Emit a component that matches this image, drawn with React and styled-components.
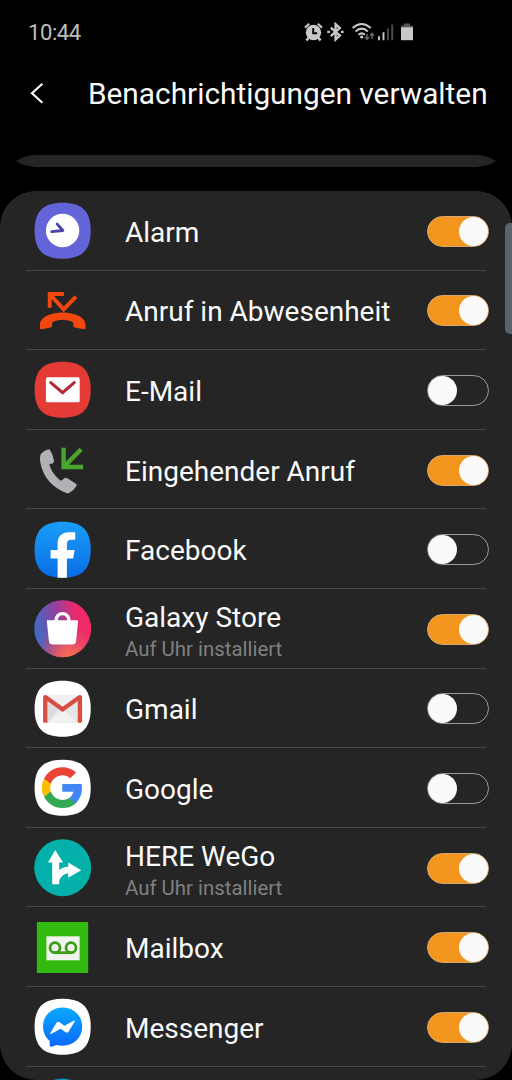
import { useState } from 'react';
import styled, { createGlobalStyle } from 'styled-components';

const GlobalStyle = createGlobalStyle`
  * {
    box-sizing: border-box;
  }

  body {
    margin: 0;
    background-color: #000;
    font-family: Roboto, 'Liberation Sans', sans-serif;
  }
`;

const Screen = styled.div`
  position: relative;
  display: flex;
  flex-direction: column;
  width: 512px;
  height: 1080px;
  background-color: #000;
  overflow: hidden;
`;

const StatusBar = styled.div`
  display: flex;
  align-items: center;
  justify-content: space-between;
  height: 64px;
  padding: 0 99px 0 28px;
`;

const Clock = styled.span`
  font-size: 22px;
  letter-spacing: -0.4px;
  color: #bdbdbd;
`;

const StatusIcons = styled.div`
  display: flex;
  align-items: center;

  svg {
    display: block;
  }
`;

const StatusIcon = styled.svg`
  width: ${({ $width }) => $width}px;
  height: 20px;
  margin-left: ${({ $gap }) => $gap || 0}px;
`;

const Header = styled.header`
  display: flex;
  align-items: center;
  height: 60px;
  padding-left: 28px;
`;

const BackButton = styled.button`
  display: flex;
  width: 60px;
  padding: 0;
  border: none;
  background: none;
`;

const Title = styled.h1`
  margin: 0;
  font-size: 29.8px;
  font-weight: 400;
  line-height: 36px;
  white-space: nowrap;
  color: #fafafa;
`;

const ScrollArea = styled.main`
  flex: 1;
  min-height: 0;
  margin-top: 31px;
  border-radius: 36px;
  overflow: hidden;
`;

const Card = styled.section`
  background-color: #252525;
  border-radius: 36px;
`;

// Scrolled almost out of view, only its lower edge is left
const PreviousCard = styled(Card)`
  height: 80px;
  margin-top: -68px;
  margin-bottom: 24px;
`;

const Row = styled.div`
  display: flex;
  align-items: center;
  position: relative;
  height: 79.6px;
  padding: 0 23px 0 34px;

  & + &::before {
    content: '';
    position: absolute;
    top: -1px;
    left: 26px;
    right: 26px;
    height: 1px;
    background-color: #484848;
  }
`;

const AppIcon = styled.svg`
  flex: none;
  width: 57px;
  height: 57px;
  overflow: visible;
`;

const Labels = styled.div`
  flex: 1;
  padding-left: 34px;
  padding-top: 4px;
`;

const Name = styled.div`
  font-size: 28px;
  line-height: 34px;
  white-space: nowrap;
  color: #fafafa;
`;

const Detail = styled.div`
  font-size: 20.4px;
  line-height: 24px;
  margin-top: 2px;
  color: #7f8082;
`;

const Track = styled.button`
  display: flex;
  justify-content: ${({ $on }) => ($on ? 'flex-end' : 'flex-start')};
  align-items: center;
  width: 62px;
  height: 31px;
  margin-top: 1px;
  padding: 0;
  border: 1px solid ${({ $on }) => ($on ? '#d3a872' : '#9b9b9b')};
  border-radius: 16px;
  background-color: ${({ $on }) => ($on ? '#f3961e' : 'transparent')};
`;

const Knob = styled.span`
  width: 29px;
  height: 29px;
  border-radius: 50%;
  background-color: #fafafa;
`;

const ScrollThumb = styled.div`
  position: absolute;
  top: 223px;
  right: 0;
  width: 7px;
  height: 111px;
  border-radius: 5px 0 0 5px;
  background-color: #59656c;
`;

const Squircle = ({ fill }) => (
  <path d="M28.2 0C47.7 0 56.3 8.600 56.3 28S47.7 56 28.2 56 .2 47.4 .2 28 8.7 0 28.2 0z" fill={fill} />
);

const icons = {
  alarm: (
    <>
      <Squircle fill="#6264d8" />
      <circle cx="28.2" cy="27.8" r="16.7" fill="#fff" />
      <path d="M22.8 21.4l5.7 6.4-11.2 1.1" fill="none" stroke="#4d43ae" strokeWidth="2.8" strokeLinecap="round" strokeLinejoin="round" />
    </>
  ),
  missed: (
    <g transform="translate(0 .4)">
      <path d="M29.5 10.9H15.3v13.8M15.5 11.1l13.7 15.2L41.6 13.6" fill="none" stroke="#f4460f" strokeWidth="3.9" />
      <path d="M5.5 42C5.5 33 18 29.3 28.2 29.3S51.2 33 51.2 42v2.8q0 1.7-1.8 1.4l-9-1.7q-1.4-.3-1.6-1.6l.2-2.3q.1-1.4-1.6-2.2-9-3.3-18.2 0-1.7.8-1.6 2.2l.2 2.3q-.2 1.3-1.6 1.6l-9 1.7q-1.700.3-1.700-1.400z" fill="#f4460f" />
    </g>
  ),
  email: (
    <>
      <Squircle fill="#e53b36" />
      <rect x="11.5" y="15.6" width="33.8" height="25" rx="1.6" fill="#fff" />
      <path d="M16.4 20.9l11.8 10 11.6-10" fill="none" stroke="#b12a38" strokeWidth="3.2" strokeLinecap="round" />
    </>
  ),
  incoming: (
    <>
      <path d="M29.2 6v19.3h19.6M46.8 7.6L30.3 24.2" fill="none" stroke="#49a52d" strokeWidth="4.4" />
      <path d="M6.4 12.3Q9.6 8.5 14 7.6q1.2-.1 1.9 1.2 2.8 4.5 3.7 10 .2 2.2-1.2 2.9l-3.5.7q1.8 8.8 10.6 16.1 1 .7 1.8.2l2.6-2.2q1.5-.9 3 0l8.3 5.3q1.6 1 .8 2.4-2.7 4.6-7.3 7.1-1.2.5-2.7 0Q9.5 42.5 5.7 19.5q-.4-5 .7-7.2z" fill="#b0b2b5" />
    </>
  ),
  facebook: (
    <>
      <defs>
        <linearGradient id="facebook" x1="0" y1="0" x2="0" y2="1">
          <stop offset="0" stopColor="#1a9ef8" />
          <stop offset="1" stopColor="#096de6" />
        </linearGradient>
      </defs>
      <Squircle fill="url(#facebook)" />
      <path d="M23.2 56V36.7h-7v-8.4h7V22c0-7.5 4.4-11.4 11.3-11.4h6.3V18H37c-3.5 0-4.5 1.8-4.5 4.5v5.8h7.7l-1.4 8.4h-6.3V56z" fill="#fff" />
    </>
  ),
  store: (
    <>
      <defs>
        <linearGradient id="store" x1="0" y1=".6" x2="1" y2=".4">
          <stop offset=".08" stopColor="#4867c0" />
          <stop offset=".45" stopColor="#953f9f" />
          <stop offset=".8" stopColor="#ee2a69" />
        </linearGradient>
        <radialGradient id="storeGlow" cx=".62" cy="1.02" r=".6">
          <stop offset="0" stopColor="#fb704a" />
          <stop offset=".35" stopColor="#f3625a" stopOpacity=".85" />
          <stop offset="1" stopColor="#ee3f66" stopOpacity="0" />
        </radialGradient>
      </defs>
      <circle cx="28.3" cy="28" r="28.5" fill="url(#store)" />
      <circle cx="28.3" cy="28" r="28.5" fill="url(#storeGlow)" />
      <path d="M21.7 20.5v-1.2a6.4 6.4 0 0 1 12.8 0v1.2" fill="none" stroke="#fff" strokeWidth="3.3" />
      <path d="M12.8 19.5h30.400q.6 0 .5.800l-2 20q-.4 3.600-4 3.600H18.500q-3.600 0-4-3.600l-2.100-20q0-.8.400-.8z" fill="#fff" />
    </>
  ),
  gmail: (
    <>
      <Squircle fill="#fff" />
      <rect x="9" y="14.2" width="38.4" height="27.9" rx="1" fill="#e6e6e6" />
      <path d="M13 42.1l15.2-13.4 15.2 13.4z" fill="#f1f1f1" />
      <path d="M13 20v22.1L24 28z" fill="#dcdcdc" />
      <path d="M9.8 14.3h36.8L28.2 27.5z" fill="#f0f0f0" />
      <path d="M8.7 16.4q0-2 2-2.2 1 0 1.8.6l15.7 11.3 15.7-11.3q.8-.6 1.8-.6 2 .2 2 2.2v24.3q0 1.4-1.4 1.4h-2.9V20.3l-15.2 11-15.2-11v21.8h-2.9q-1.4 0-1.4-1.4z" fill="#d84d41" />
    </>
  ),
  google: (
    <>
      <Squircle fill="#fff" />
      <g transform="translate(5.6 5.6) scale(1.86)">
        <path fill="#4285f4" d="M22.56 12.25c0-.78-.07-1.53-.2-2.25H12v4.26h5.92c-.26 1.37-1.04 2.53-2.21 3.31v2.77h3.57c2.08-1.92 3.28-4.74 3.28-8.09z" />
        <path fill="#34a853" d="M12 23c2.97 0 5.46-.98 7.28-2.66l-3.57-2.77c-.98.66-2.23 1.06-3.71 1.06-2.86 0-5.29-1.93-6.16-4.53H2.18v2.84C3.99 20.53 7.7 23 12 23z" />
        <path fill="#fbbc05" d="M5.84 14.09c-.22-.66-.35-1.36-.35-2.09s.13-1.43.35-2.09V7.07H2.18C1.43 8.55 1 10.22 1 12s.43 3.45 1.18 4.93l2.85-2.22.81-.62z" />
        <path fill="#ea4335" d="M12 5.38c1.62 0 3.06.56 4.21 1.64l3.15-3.15C17.45 2.09 14.97 1 12 1 7.7 1 3.99 3.47 2.18 7.07l3.66 2.84c.87-2.6 3.3-4.53 6.16-4.53z" />
      </g>
    </>
  ),
  here: (
    <>
      <circle cx="28.3" cy="28" r="28.5" fill="#04b0aa" />
      <path d="M20.9 10.2l7.7 12.5h-3.8v7.6q3.4-3 9-3.2v-4.4l13 7.8-13 7.500v-4.500q-6.500.6-9 7.600v3.400h-7V22.700h-4.200z" fill="#fff" />
    </>
  ),
  mailbox: (
    <>
      <rect x="2.5" y="2.4" width="51.3" height="51" rx=".6" fill="#33ba10" />
      <rect x="12" y="16.6" width="33.2" height="24" fill="#f1f3ef" />
      <g fill="none" stroke="#3d9c18" strokeWidth="2.8">
        <circle cx="20.6" cy="28" r="5" />
        <circle cx="36.6" cy="28" r="5" />
        <path d="M20.6 33h16" />
      </g>
    </>
  ),
  messenger: (
    <>
      <defs>
        <linearGradient id="messenger" x1="0" y1="0" x2="0" y2="1">
          <stop offset="0" stopColor="#08aaff" />
          <stop offset="1" stopColor="#0b68fd" />
        </linearGradient>
      </defs>
      <Squircle fill="#fff" />
      <path d="M28.2 8.7c11.2 0 19.6 8.2 19.6 19.2s-8.4 19.2-19.6 19.2c-2 0-4-.3-5.8-.8l-5.500 1.800q-1.600.3-1.600-1.300v-4.400C11 38.700 8.600 33.600 8.600 27.900c0-11 8.400-19.200 19.600-19.200z" fill="url(#messenger)" />
      <path d="M15.9 34.3l6.2-10.2q1.3-1.8 3.1-.6l4.4 3.3q.5.3 1 0l9-4.9q1.200-.3.7.9l-6 10q-1.200 1.900-3.100.8l-4.600-3.400q-.5-.3-1 0l-8.900 5q-1.300.4-.8-.9z" fill="#fff" />
    </>
  ),
  next: <circle cx="28.3" cy="28" r="28.5" fill="#0a93cb" />,
};

const apps = [
  { icon: 'alarm', name: 'Alarm', on: true },
  { icon: 'missed', name: 'Anruf in Abwesenheit', on: true },
  { icon: 'email', name: 'E-Mail', on: false },
  { icon: 'incoming', name: 'Eingehender Anruf', on: true },
  { icon: 'facebook', name: 'Facebook', on: false },
  { icon: 'store', name: 'Galaxy Store', detail: 'Auf Uhr installiert', on: true },
  { icon: 'gmail', name: 'Gmail', on: false },
  { icon: 'google', name: 'Google', on: false },
  { icon: 'here', name: 'HERE WeGo', detail: 'Auf Uhr installiert', on: true },
  { icon: 'mailbox', name: 'Mailbox', on: true },
  { icon: 'messenger', name: 'Messenger', on: true },
];

function AppRow ({ icon, name, detail, on }) {
  const [checked, setChecked] = useState(on);

  return (
    <Row>
      <AppIcon viewBox="-0.4 -0.7 57 57">{icons[icon]}</AppIcon>
      <Labels>
        <Name>{name}</Name>
        {detail && <Detail>{detail}</Detail>}
      </Labels>
      <Track
        role="switch"
        aria-checked={checked}
        aria-label={name}
        $on={checked}
        onClick={() => setChecked(!checked)}
      >
        <Knob />
      </Track>
    </Row>
  );
}

function Status () {
  return (
    <StatusBar>
      <Clock>10:44</Clock>
      <StatusIcons>
        <StatusIcon $width={19} viewBox="0 0 19 20">
          <circle cx="9.5" cy="10.5" r="7.7" fill="#c8c8c8" />
          <path d="M1 5.600L5.200 1.800M18 5.600L13.800 1.800" stroke="#c8c8c8" strokeWidth="2.200" />
          <path d="M4.800 15.500l-2.300 3M14.200 15.500l2.300 3" stroke="#c8c8c8" strokeWidth="2.600" />
          <path d="M9.200 6v5.200h4" fill="none" stroke="#000" strokeWidth="1.900" />
        </StatusIcon>
        <StatusIcon $width={17} $gap={4} viewBox="0 0 17 20">
          <path d="M3.800 5.600l9 8-4.200 3.900V2.200l4.200 3.900-9 8" fill="none" stroke="#c8c8c8" strokeWidth="2.400" />
          <path d="M.3 9.800h2.600M14 9.800h2.600" stroke="#c8c8c8" strokeWidth="2.200" />
        </StatusIcon>
        <StatusIcon $width={23} $gap={8} viewBox="0 0 23 20">
          <g fill="none" stroke="#c8c8c8" strokeWidth="2">
            <path d="M.6 6q9-8 18.200 0M3.600 9.400q6.100-5.600 12.200 0M6.500 12.700q3.200-2.700 6.400 0" />
          </g>
          <circle cx="9.700" cy="15" r="1.600" fill="#c8c8c8" />
          <path d="M15 12v5M13 15l2 2.300 2-2.300M20 17v-5M18 13.800l2-2.300 2 2.300" fill="none" stroke="#656565" strokeWidth="1.500" />
        </StatusIcon>
        <StatusIcon $width={16} $gap={3} viewBox="0 0 16 20">
          <path d="M1 14.200v4M5.500 10.300v7.900" stroke="#c8c8c8" strokeWidth="1.900" />
          <path d="M10 6.500v11.700M14.200 2.500v15.700" stroke="#4c4c4c" strokeWidth="1.900" />
        </StatusIcon>
        <StatusIcon $width={12} $gap={7} viewBox="0 0 12 20">
          <path d="M0 3.600h3V1.600h6v2h3v1.700H0z" fill="#555" />
          <path d="M0 5.200h12v13H0z" fill="#c8c8c8" />
        </StatusIcon>
      </StatusIcons>
    </StatusBar>
  );
}

export default function App () {
  return (
    <Screen>
      <GlobalStyle />
      <Status />
      <Header>
        <BackButton aria-label="Zurück">
          <svg width="18" height="24" viewBox="0 0.7 18 24">
            <path d="M14.400 2.500L4 12l10.400 9.500" fill="none" stroke="#fafafa" strokeWidth="2.200" />
          </svg>
        </BackButton>
        <Title>Benachrichtigungen verwalten</Title>
      </Header>
      <ScrollArea>
        <PreviousCard />
        <Card>
          {apps.map((app) => (
            <AppRow key={app.name} {...app} />
          ))}
          <Row>
            <AppIcon viewBox="0 -1 57 57">{icons.next}</AppIcon>
          </Row>
        </Card>
      </ScrollArea>
      <ScrollThumb />
    </Screen>
  );
}
